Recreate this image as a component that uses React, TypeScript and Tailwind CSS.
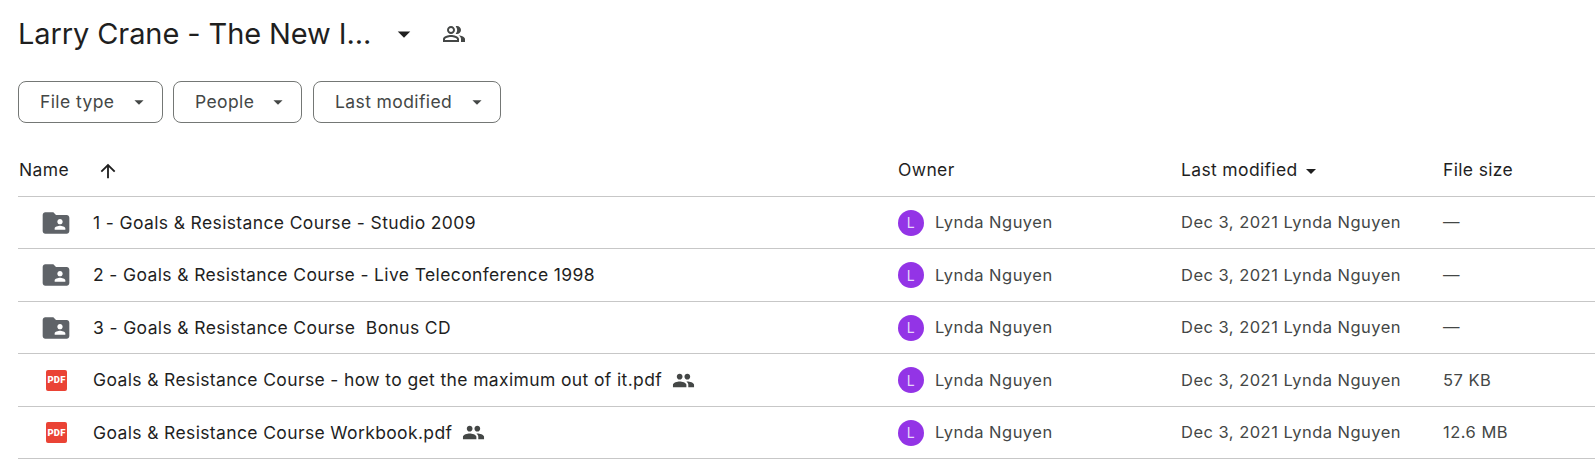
import { MdArrowDropDown, MdArrowUpward, MdFolderShared, MdPeople, MdOutlinePeopleAlt } from "react-icons/md";

type Row = {
  name: string;
  pdf?: boolean;
  shared?: boolean;
  size: string;
  height: string;
};

const rows: Row[] = [
  { name: "1 - Goals & Resistance Course - Studio 2009", size: "—", height: "h-[52px]" },
  { name: "2 - Goals & Resistance Course - Live Teleconference 1998", size: "—", height: "h-[53px]" },
  { name: "3 - Goals & Resistance Course  Bonus CD", size: "—", height: "h-[52px]" },
  { name: "Goals & Resistance Course - how to get the maximum out of it.pdf", pdf: true, shared: true, size: "57 KB", height: "h-[53px]" },
  { name: "Goals & Resistance Course Workbook.pdf", pdf: true, shared: true, size: "12.6 MB", height: "h-[52px]" },
];

const filters = [
  { label: "File type", width: "w-[145px]" },
  { label: "People", width: "w-[129px]" },
  { label: "Last modified", width: "w-[188px] ml-px" },
];

const PdfIcon = () => (
  <div className="w-[21px] h-[21px] ml-[2px] rounded-[2px] bg-[#ea4335] flex items-center justify-center text-white text-[9.5px] font-black leading-none tracking-[0.2px] font-['Roboto',sans-serif]">
    PDF
  </div>
);

export default function App() {
  return (
    <div className="w-[1595px] h-[476px] bg-white pl-[18px] font-['Inter',sans-serif] text-[#1f1f1f] overflow-hidden">
      <div className="flex items-center h-[67px]">
        <h1 className="text-[29px] font-normal leading-none w-[355px] whitespace-nowrap tracking-[-0.1px]">Larry Crane - The New I...</h1>
        <MdArrowDropDown size={30} className="text-[#1f1f1f] ml-[16px]" />
        <MdOutlinePeopleAlt size={24} className="text-[#444746] ml-[23px]" />
      </div>

      <div className="flex gap-[10px] mt-[14px]">
        {filters.map((f) => (
          <div key={f.label} className={`${f.width} h-[42px] border border-[#747775] rounded-lg flex items-center justify-between pl-[21px] pr-[12px] text-[#444746] text-[17.5px] tracking-[0.4px]`}>
            <span>{f.label}</span>
            <MdArrowDropDown size={22} className="text-[#444746]" />
          </div>
        ))}
      </div>

      <div className="flex items-center h-[57px] mt-[17px] pt-[5px] border-b border-[#c7c7c7] text-[17.5px] tracking-[0.35px] w-[1577px]">
        <div className="w-[880px] flex items-center pl-px">
          <span>Name</span>
          <MdArrowUpward size={22} className="ml-[28px]" />
        </div>
        <div className="w-[283px]">Owner</div>
        <div className="w-[262px] flex items-center">
          <span>Last modified</span>
          <MdArrowDropDown size={24} className="ml-px" />
        </div>
        <div>File size</div>
      </div>

      {rows.map((r) => (
        <div key={r.name} className={`flex items-center ${r.height} border-b border-[#c7c7c7] text-[16.5px] tracking-[0.48px] w-[1577px]`}>
          <div className="w-[880px] flex items-center text-[17.5px] tracking-[0.37px]">
            <div className="w-[75px] flex justify-center">
              {r.pdf ? <PdfIcon /> : <MdFolderShared size={32} className="text-[#5f6368]" />}
            </div>
            <span className="whitespace-pre pt-px">{r.name}</span>
            {r.shared && <MdPeople size={23} className="ml-[10px] text-[#444746]" />}
          </div>
          <div className="w-[283px] flex items-center text-[#444746]">
            <div className="w-[26px] h-[26px] rounded-full bg-[#9334e6] flex items-center justify-center text-[#e6d4fa] text-[14px]">L</div>
            <span className="ml-[11px]">Lynda Nguyen</span>
          </div>
          <div className="w-[262px] text-[#444746]">Dec 3, 2021 Lynda Nguyen</div>
          <div className="text-[#444746]">{r.size}</div>
        </div>
      ))}
    </div>
  );
}
